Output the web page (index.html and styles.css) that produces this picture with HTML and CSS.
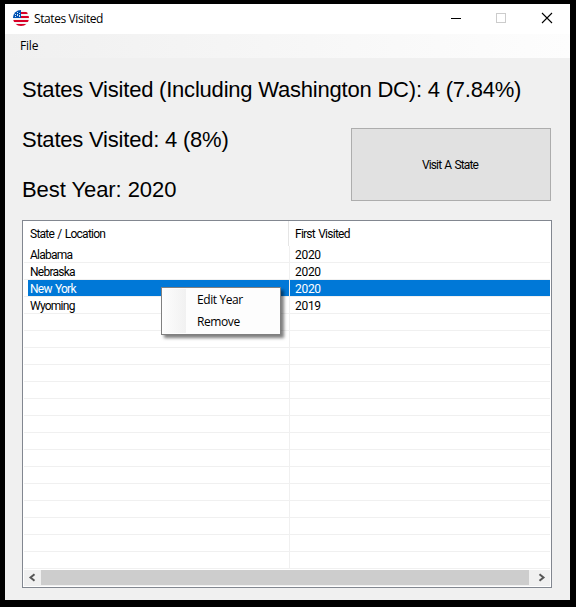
FILE: index.html
```
<!DOCTYPE html>
<html lang="en">
<head>
<meta charset="utf-8">
<title>States Visited</title>
<link rel="stylesheet" href="styles.css">
</head>
<body>
<main class="window">
  <header class="titlebar">
    <svg class="flag" width="16" height="16" viewBox="0 0 16 16">
      <defs><clipPath id="disc"><circle cx="8" cy="8" r="8"/></clipPath></defs>
      <g clip-path="url(#disc)">
        <path fill="#f3f3f3" d="M0 0h16v16H0z"/>
        <path fill="#d80027" d="M8 2h8v2H8zM8 6h8v2H8zM0 10h16v2H0zM0 14h16v2H0z"/>
        <path fill="#0052b4" d="M0 0h8v8H0z"/>
        <path fill="#d5e3f4" d="M4 2h1v1H4zM6 3h1v1H6zM2 4h1v1H2zM4 4h1v2H4zM6 5h1v2H6zM2 6h1v1H2z"/>
      </g>
    </svg>
    <h1 class="title">States Visited</h1>
    <svg class="controls" width="104" height="12" viewBox="0 0 104 12" fill="none" shape-rendering="crispEdges">
      <path stroke="#000" d="M1 6.5h10"/>
      <path stroke="#ccc" d="M46.500 1.500h9v9h-9z"/>
      <path stroke="#000" stroke-width="1.100" shape-rendering="auto" d="M92 1l10 10M102 1L92 11"/>
    </svg>
  </header>
  <nav class="menubar"><span class="menu-item">File</span></nav>
  <section class="content">
    <div class="summary">
      <p class="stat stat-wide">States Visited (Including Washington DC): 4 (7.84%)</p>
      <p class="stat">States Visited: 4 (8%)</p>
      <p class="stat stat-year">Best Year: 2020</p>
      <button class="visit">Visit A State</button>
    </div>
    <div class="list">
      <div class="head"><span>State / Location</span><span>First Visited</span></div>
      <div class="rows">
        <div class="row"><span>Alabama</span><span>2020</span></div>
        <div class="row"><span>Nebraska</span><span>2020</span></div>
        <div class="row selected"><span>New York</span><span>2020</span></div>
        <div class="row"><span>Wyoming</span><span>2019</span></div>
        <div class="row"><span></span><span></span></div>
        <div class="row"><span></span><span></span></div>
        <div class="row"><span></span><span></span></div>
        <div class="row"><span></span><span></span></div>
        <div class="row"><span></span><span></span></div>
        <div class="row"><span></span><span></span></div>
        <div class="row"><span></span><span></span></div>
        <div class="row"><span></span><span></span></div>
        <div class="row"><span></span><span></span></div>
        <div class="row"><span></span><span></span></div>
        <div class="row"><span></span><span></span></div>
        <div class="row"><span></span><span></span></div>
        <div class="row"><span></span><span></span></div>
        <div class="row"><span></span><span></span></div>
        <div class="row"><span></span><span></span></div>
      </div>
      <div class="scrollbar">
        <svg width="17" height="16" viewBox="0 0 17 16" fill="none" stroke="#555" stroke-width="2"><path d="M10.500 4.200L6.500 7.500l4 3.300"/></svg>
        <div class="thumb"></div>
        <svg width="21" height="16" viewBox="0 0 21 16" fill="none" stroke="#555" stroke-width="2"><path d="M10.500 4.200l4 3.300-4 3.300"/></svg>
      </div>
    </div>
  </section>
  <div class="context-menu">
    <div class="context-item">Edit Year</div>
    <div class="context-item">Remove</div>
  </div>
</main>
</body>
</html>
```
FILE: styles.css
```
* { box-sizing: border-box; }
body {
  margin: 0;
  height: 607px;
  padding: 4px 6px 7px 5px;
  background: #000;
  color: #000;
  font: 12px/16px "Open Sans", sans-serif;
  overflow: hidden;
}
.window {
  position: relative;
  width: 565px;
  height: 596px;
  background: #f0f0f0;
}
.titlebar {
  display: flex;
  align-items: center;
  height: 30px;
  padding: 0 16px 0 8px;
  background: #fff;
}
.flag { flex: none; margin-top: -2px; }
.title {
  margin: 0 auto 0 5px;
  font-size: 12px;
  font-weight: 400;
  letter-spacing: -0.4px;
}
.controls { margin-top: -2px; }
.menubar {
  height: 24px;
  padding: 4px 15px;
  background: linear-gradient(90deg, #f0f0f0, #fdfdfd);
  letter-spacing: -0.2px;
}
.content { padding: 17px 18px 0 17px; }
.summary {
  display: grid;
  grid-template-columns: 329px 200px;
  grid-template-rows: 50px 50px 45px;
}
.stat {
  margin: 0;
  font: 22px/30px "Liberation Sans", sans-serif;
  letter-spacing: -0.21px;
  white-space: nowrap;
}
.stat-wide { grid-column: 1 / 3; }
.stat-year { letter-spacing: -0.07px; }
.visit {
  grid-column: 2;
  grid-row: 2 / 4;
  height: 73px;
  margin-top: 3px;
  padding: 0 2px 0 0;
  border: 1px solid #adadad;
  background: #e1e1e1;
  color: #000;
  font: 12px/16px Roboto, sans-serif;
  letter-spacing: -0.85px;
  word-spacing: 1px;
}
.list {
  height: 368px;
  border: 1px solid #828790;
  background: #fff;
  font: 12px/16px Roboto, sans-serif;
  letter-spacing: -0.3px;
}
.head {
  display: flex;
  height: 25px;
  padding-left: 7px;
  line-height: 26px;
  letter-spacing: -0.75px;
  word-spacing: 1px;
}
.head span:first-child {
  width: 259px;
  margin-right: 6px;
  border-right: 1px solid #e5e5e5;
}
.rows { padding: 0 1px; }
.row {
  display: flex;
  height: 17px;
  border-bottom: 1px solid #f0f0f0;
}
.row span { padding-left: 5px; padding-top: 1px; }
.row span:first-child {
  width: 266px;
  padding-left: 6px;
  border-right: 1px solid #f0f0f0;
  letter-spacing: -0.75px;
  word-spacing: 1px;
}
.selected span { background: #0078d7; color: #fff; }
.selected span:first-child { margin-left: 4px; width: 262px; padding-left: 2px; }
.selected span:last-child { flex: 1; }
.scrollbar {
  display: flex;
  height: 16px;
  margin: 1px 1px 0;
  background: #f0f0f0;
}
.thumb { flex: 1; height: 15px; background: #cdcdcd; }
.context-menu {
  position: absolute;
  left: 156px;
  top: 283px;
  width: 120px;
  height: 48px;
  padding: 2px;
  border: 1px solid #808080;
  background: linear-gradient(90deg, #fcfcfc, #f1f1f1) 2px 1px / 22px 44px no-repeat #fdfdfd;
  box-shadow: 3px 3px 3px rgba(0, 0, 0, 0.5);
}
.context-item {
  height: 22px;
  padding-left: 33px;
  line-height: 20px;
  letter-spacing: -0.4px;
}
```
